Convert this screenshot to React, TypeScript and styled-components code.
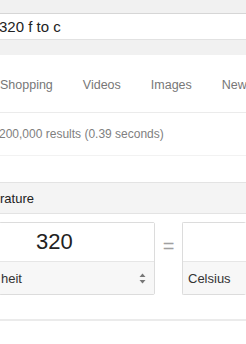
import React from 'react';
import styled, { createGlobalStyle } from 'styled-components';

const GlobalStyle = createGlobalStyle`
  html, body {
    margin: 0;
    padding: 0;
    background: #ffffff;
  }

  body {
    width: 246px;
    height: 344px;
    overflow: hidden;
    font-family: 'Liberation Sans', Arial, sans-serif;
  }
`;

const Page = styled.div`
  display: flex;
  flex-direction: column;
  width: 246px;
  height: 344px;
  overflow: hidden;
`;

const SearchBand = styled.header`
  background: #f1f1f1;
  padding: 13px 0 15px;
`;

const SearchBox = styled.div`
  height: 25px;
  display: flex;
  align-items: center;
  background: white;
  border-top: 1px solid #d6d6d6;
  border-bottom: 1px solid #e2e2e2;
  margin-left: -1px;
  font-size: 15px;
  color: #222;
`;

const Tabs = styled.nav`
  display: flex;
  gap: 30px;
  height: 58px;
  align-items: center;
  padding-top: 3px;
  border-bottom: 1px solid #ebebeb;
  box-sizing: border-box;
  font-size: 12.5px;
  color: #777;
  white-space: nowrap;
`;

const Tab = styled.span`
  flex: none;
`;

const Stats = styled.div`
  height: 42px;
  display: flex;
  align-items: center;
  font-size: 12px;
  color: #808080;
  margin-left: -1px;
`;

const Card = styled.section`
  display: flex;
  flex-direction: column;
  border-top: 1px solid #f2f2f2;
  padding-top: 26px;
  padding-bottom: 24px;
  border-bottom: 2px solid #ebebeb;
`;

const UnitHeader = styled.div`
  height: 30px;
  display: flex;
  align-items: center;
  background: #f4f4f4;
  border-top: 1px solid #e3e3e3;
  border-bottom: 1px solid #e3e3e3;
  font-size: 13px;
  color: #222;
`;

const ConverterRow = styled.div`
  display: grid;
  grid-template-columns: 156px 27px 1fr;
  margin-top: 8px;
  margin-left: -1px;
`;

const UnitBox = styled.div<{ $side: 'left' | 'right' }>`
  display: flex;
  flex-direction: column;
  border: 1px solid #dcdcdc;
  border-right-width: ${(p) => (p.$side === 'right' ? '0' : '1px')};
  border-radius: 2px;
`;

const ValueField = styled.div`
  height: 38px;
  display: flex;
  align-items: center;
  padding-left: 36px;
  background: white;
  font-size: 22px;
  color: #222;
  border-bottom: 1px solid #e6e6e6;
`;

const UnitSelect = styled.div<{ $side: 'left' | 'right' }>`
  height: 32px;
  display: flex;
  align-items: center;
  justify-content: space-between;
  padding-left: ${(p) => (p.$side === 'right' ? '5px' : '1px')};
  padding-right: 8px;
  background: #f7f7f7;
  font-size: 13px;
  color: #333;
`;

const Equals = styled.div`
  display: flex;
  justify-content: center;
  padding-top: 14px;
  font-size: 20px;
  line-height: 20px;
  color: #a0a0a0;
`;

const SortArrows = () => (
  <svg width="7" height="11" viewBox="0 0 7 11">
    <path d="M3.5 0.5 L6.5 4 L0.5 4 Z" fill="#777" />
    <path d="M3.5 10.5 L6.5 7 L0.5 7 Z" fill="#777" />
  </svg>
);

const App = () => (
  <>
    <GlobalStyle />
    <Page>
      <SearchBand>
        <SearchBox>320 f to c</SearchBox>
      </SearchBand>
      <Tabs>
        <Tab>Shopping</Tab>
        <Tab>Videos</Tab>
        <Tab>Images</Tab>
        <Tab>New</Tab>
      </Tabs>
      <Stats>200,000 results (0.39 seconds)</Stats>
      <Card>
        <UnitHeader>rature</UnitHeader>
        <ConverterRow>
          <UnitBox $side="left">
            <ValueField>320</ValueField>
            <UnitSelect $side="left">
              heit
              <SortArrows />
            </UnitSelect>
          </UnitBox>
          <Equals>=</Equals>
          <UnitBox $side="right">
            <ValueField />
            <UnitSelect $side="right">Celsius</UnitSelect>
          </UnitBox>
        </ConverterRow>
      </Card>
    </Page>
  </>
);

export default App;
